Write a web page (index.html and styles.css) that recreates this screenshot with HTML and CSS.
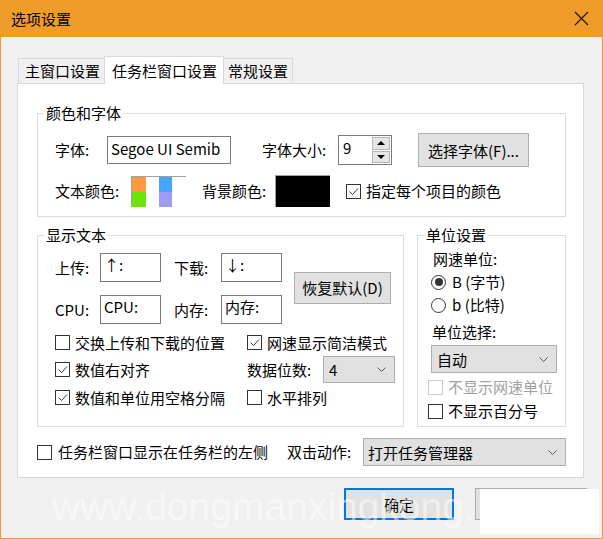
FILE: index.html
```html
<!DOCTYPE html>
<html lang="zh-CN">
<head>
    <meta charset="UTF-8">
    <title>选项设置</title>
    <link rel="stylesheet" href="styles.css">
</head>
<body>
    <div class="window">
        <div class="titlebar">
            <span class="title">选项设置</span>
            <svg class="close" width="15" height="15" viewBox="0 0 15 15">
                <path d="M1 1 L14 14 M14 1 L1 14" stroke="#111" stroke-width="1.1" fill="none"/>
            </svg>
        </div>

        <div class="tabs">
            <div class="tab tab-main">主窗口设置</div>
            <div class="tab tab-taskbar active">任务栏窗口设置</div>
            <div class="tab tab-general">常规设置</div>
        </div>

        <div class="panel">
            <fieldset class="group group-font">
                <legend>颜色和字体</legend>
                <div class="font-row">
                    <span class="label lbl-font">字体:</span>
                    <div class="edit edit-font">Segoe UI Semib</div>
                    <span class="label lbl-size">字体大小:</span>
                    <div class="spin">
                        <div class="spin-val">9</div>
                        <div class="spin-btns">
                            <div class="spin-btn"><span class="arrow-up"></span></div>
                            <div class="spin-btn"><span class="arrow-down"></span></div>
                        </div>
                    </div>
                    <div class="btn btn-font">选择字体(F)...</div>
                </div>
                <div class="color-row">
                    <span class="label lbl-textcolor">文本颜色:</span>
                    <div class="swatch">
                        <span class="sw-orange"></span><span></span><span class="sw-blue"></span><span></span>
                        <span class="sw-green"></span><span></span><span class="sw-purple"></span><span></span>
                    </div>
                    <span class="label lbl-bgcolor">背景颜色:</span>
                    <div class="bg-color"></div>
                    <label class="check check-each">
                        <span class="box checked"><svg width="13" height="13" viewBox="0 0 13 13"><path d="M2.5 6.5 L5.5 9.5 L11 3.5" stroke="#333" stroke-width="1" fill="none"/></svg></span>
                        指定每个项目的颜色
                    </label>
                </div>
            </fieldset>

            <div class="group-row">
                <fieldset class="group group-text">
                    <legend>显示文本</legend>
                    <div class="text-top">
                        <div class="text-grid">
                            <span class="label">上传:</span>
                            <div class="edit">↑:</div>
                            <span class="label lbl-right">下载:</span>
                            <div class="edit">↓:</div>
                            <span class="label">CPU:</span>
                            <div class="edit">CPU:</div>
                            <span class="label lbl-right">内存:</span>
                            <div class="edit">内存:</div>
                        </div>
                        <div class="btn btn-reset">恢复默认(D)</div>
                    </div>
                    <div class="check-grid">
                        <label class="check">
                            <span class="box"></span>
                            交换上传和下载的位置
                        </label>
                        <label class="check">
                            <span class="box checked"><svg width="13" height="13" viewBox="0 0 13 13"><path d="M2.5 6.5 L5.5 9.5 L11 3.5" stroke="#333" stroke-width="1" fill="none"/></svg></span>
                            网速显示简洁模式
                        </label>
                        <label class="check">
                            <span class="box checked"><svg width="13" height="13" viewBox="0 0 13 13"><path d="M2.5 6.5 L5.5 9.5 L11 3.5" stroke="#333" stroke-width="1" fill="none"/></svg></span>
                            数值右对齐
                        </label>
                        <div class="digits">
                            <span class="label lbl-digits">数据位数:</span>
                            <div class="combo combo-digits">
                                <span>4</span>
                                <svg width="9" height="5" viewBox="0 0 9 5"><path d="M0.5 0.5 L4.5 4.5 L8.5 0.5" stroke="#555" fill="none"/></svg>
                            </div>
                        </div>
                        <label class="check">
                            <span class="box checked"><svg width="13" height="13" viewBox="0 0 13 13"><path d="M2.5 6.5 L5.5 9.5 L11 3.5" stroke="#333" stroke-width="1" fill="none"/></svg></span>
                            数值和单位用空格分隔
                        </label>
                        <label class="check">
                            <span class="box"></span>
                            水平排列
                        </label>
                    </div>
                </fieldset>

                <fieldset class="group group-unit">
                    <legend>单位设置</legend>
                    <div class="unit-line unit-title">网速单位:</div>
                    <label class="radio radio-byte">
                        <span class="dot selected"></span>
                        B (字节)
                    </label>
                    <label class="radio radio-bit">
                        <span class="dot"></span>
                        b (比特)
                    </label>
                    <div class="unit-line unit-select">单位选择:</div>
                    <div class="combo combo-unit">
                        <span>自动</span>
                        <svg width="9" height="5" viewBox="0 0 9 5"><path d="M0.5 0.5 L4.5 4.5 L8.5 0.5" stroke="#555" fill="none"/></svg>
                    </div>
                    <label class="check disabled unit-check">
                        <span class="box"></span>
                        不显示网速单位
                    </label>
                    <label class="check unit-check unit-check-last">
                        <span class="box"></span>
                        不显示百分号
                    </label>
                </fieldset>
            </div>

            <div class="bottom-row">
                <label class="check check-left">
                    <span class="box"></span>
                    任务栏窗口显示在任务栏的左侧
                </label>
                <span class="label lbl-dblclick">双击动作:</span>
                <div class="combo combo-action">
                    <span>打开任务管理器</span>
                    <svg width="9" height="5" viewBox="0 0 9 5"><path d="M0.5 0.5 L4.5 4.5 L8.5 0.5" stroke="#555" fill="none"/></svg>
                </div>
            </div>
        </div>

        <div class="buttons">
            <div class="btn btn-ok">确定</div>
            <div class="btn btn-cancel">取消</div>
        </div>

        <div class="watermark">www.dongmanxingkong.</div>
        <div class="cover"></div>
    </div>
</body>
</html>
```

FILE: styles.css
```css
body {
    margin: 0;
    font-family: "Noto Sans CJK SC", "Noto Sans", sans-serif;
    font-size: 15px;
    color: #000;
    background: #fff;
}

.window {
    position: relative;
    width: 603px;
    height: 539px;
    box-sizing: border-box;
    border: 1px solid #ef9c2b;
    border-top: 0;
    background: #f0f0f0;
    overflow: hidden;
}

.titlebar {
    display: flex;
    align-items: center;
    justify-content: space-between;
    height: 37px;
    margin: 0 -1px;
    padding: 0 14px 0 11px;
    background: #ef9c2b;
}

.title {
    line-height: 20px;
}

/* tabs */
.tabs {
    display: flex;
    align-items: flex-end;
    height: 28px;
    margin-top: 19px;
    margin-bottom: -1px;
    padding-left: 17px;
    position: relative;
    z-index: 1;
}

.tab {
    box-sizing: border-box;
    height: 25px;
    margin-bottom: 1px;
    border: 1px solid #d9d9d9;
    border-bottom: 0;
    background: #f0f0f0;
    line-height: 23px;
    white-space: nowrap;
}

.tab-main {
    width: 86px;
    padding-left: 6px;
    border-right: 0;
}

.tab-taskbar {
    width: 120px;
    padding-left: 7px;
}

.tab-general {
    width: 69px;
    padding-left: 4px;
    border-left: 0;
}

.tab.active {
    height: 28px;
    margin-bottom: 0;
    background: #fff;
    line-height: 27px;
}

.panel {
    box-sizing: border-box;
    width: 567px;
    height: 395px;
    margin-left: 16px;
    padding: 19px 17px 0 19px;
    border: 1px solid #d9d9d9;
    background: #fff;
}

/* group boxes */
.group {
    margin: 0;
    padding: 0;
    min-width: 0;
    border: 1px solid #dcdcdc;
}

.group legend {
    margin-left: 6px;
    padding: 0 2px;
    line-height: 20px;
    height: 20px;
}

.label {
    white-space: nowrap;
    line-height: 20px;
}

.edit {
    box-sizing: border-box;
    border: 1px solid #7a7a7a;
    background: #fff;
    padding: 2px 3px;
    line-height: 20px;
    white-space: nowrap;
    overflow: hidden;
}

.btn {
    box-sizing: border-box;
    display: flex;
    align-items: center;
    justify-content: center;
    border: 1px solid #adadad;
    background: #e1e1e1;
    white-space: nowrap;
}

/* colour & font group */
.font-row {
    display: flex;
    align-items: center;
    height: 34px;
    margin-top: 10px;
    padding-left: 17px;
}

.lbl-font {
    width: 52px;
}

.edit-font {
    width: 124px;
    height: 28px;
}

.lbl-size {
    width: 76px;
    margin-left: 31px;
}

.spin {
    display: flex;
    box-sizing: border-box;
    width: 54px;
    height: 30px;
    border: 1px solid #7a7a7a;
    background: #fff;
}

.spin-val {
    flex: 1;
    padding-left: 4px;
    line-height: 24px;
}

.spin-btns {
    display: flex;
    flex-direction: column;
    gap: 1px;
    width: 20px;
    padding: 1px;
    box-sizing: border-box;
}

.spin-btn {
    flex: 1;
    display: flex;
    align-items: center;
    justify-content: center;
    border: 1px solid #b5b5b5;
    background: #e5e5e5;
}

.arrow-up,
.arrow-down {
    width: 0;
    height: 0;
    border-left: 4px solid transparent;
    border-right: 4px solid transparent;
}

.arrow-up {
    border-bottom: 4px solid #000;
}

.arrow-down {
    border-top: 4px solid #000;
}

.btn-font {
    width: 111px;
    height: 34px;
    margin-left: 26px;
}

.color-row {
    display: flex;
    align-items: center;
    height: 32px;
    margin-top: 8px;
    margin-bottom: 9px;
    padding-left: 17px;
}

.lbl-textcolor {
    width: 76px;
}

.swatch {
    display: grid;
    grid-template-columns: 14px 13px 13px 14px;
    grid-template-rows: 15px 15px;
    box-sizing: border-box;
    width: 55px;
    height: 31px;
    border-top: 1px solid #a0a0a0;
    border-left: 1px solid #a0a0a0;
    background: #fff;
}

.sw-orange { background: #fd9844; }
.sw-green { background: #6ae40c; }
.sw-blue { background: #46a6fc; }
.sw-purple { background: #9d9cf5; }

.lbl-bgcolor {
    width: 73px;
    margin-left: 16px;
}

.bg-color {
    box-sizing: border-box;
    width: 55px;
    height: 32px;
    border-top: 1px solid #a0a0a0;
    border-left: 1px solid #a0a0a0;
    background: #000;
}

.check-each {
    margin-left: 16px;
}

/* checkboxes, radios, combos */
.check {
    display: flex;
    align-items: center;
    gap: 5px;
    white-space: nowrap;
    line-height: 20px;
}

.box {
    display: flex;
    align-items: center;
    justify-content: center;
    box-sizing: border-box;
    width: 15px;
    height: 15px;
    border: 1px solid #333;
    background: #fff;
}

.check.disabled {
    color: #a0a0a0;
}

.check.disabled .box {
    border-color: #cccccc;
}

.radio {
    display: flex;
    align-items: center;
    gap: 6px;
    white-space: nowrap;
    line-height: 20px;
}

.dot {
    display: flex;
    align-items: center;
    justify-content: center;
    box-sizing: border-box;
    width: 15px;
    height: 15px;
    border: 1px solid #333;
    border-radius: 50%;
    background: #fff;
}

.dot.selected::after {
    content: "";
    width: 8px;
    height: 8px;
    border-radius: 50%;
    background: #333;
}

.combo {
    display: flex;
    align-items: center;
    justify-content: space-between;
    box-sizing: border-box;
    height: 28px;
    padding: 0 8px 0 5px;
    border: 1px solid #adadad;
    background: #e1e1e1;
    white-space: nowrap;
}

/* display text group */
.group-row {
    display: flex;
    gap: 13px;
    margin-top: 8px;
}

.group-text {
    width: 367px;
    box-sizing: border-box;
}

.group-unit {
    flex: 1;
}

.text-top {
    display: flex;
    align-items: center;
    margin-top: 8px;
    padding-left: 17px;
}

.text-grid {
    display: grid;
    grid-template-columns: 45px 61px 60px 61px;
    grid-template-rows: 29px 29px;
    row-gap: 13px;
    align-items: center;
}

.text-grid .edit {
    height: 29px;
    padding-top: 1px;
}

.lbl-right {
    padding-left: 13px;
}

.btn-reset {
    width: 97px;
    height: 32px;
    margin-left: 12px;
    margin-top: -2px;
}

.check-grid {
    display: grid;
    grid-template-columns: 192px 1fr;
    grid-template-rows: 25px 29px 27px;
    align-items: center;
    margin-top: 6px;
    margin-bottom: 15px;
    padding-left: 17px;
}

.digits {
    display: flex;
    align-items: center;
}

.lbl-digits {
    width: 76px;
}

.combo-digits {
    width: 72px;
    height: 27px;
}

/* unit group */
.group-unit {
    padding-left: 13px;
}

.group-unit legend {
    margin-left: -7px;
}

.unit-line {
    display: flex;
    align-items: center;
    line-height: 20px;
}

.unit-title {
    height: 22px;
    margin-top: 3px;
    padding-left: 2px;
}

.radio-byte {
    height: 24px;
}

.radio-bit {
    height: 22px;
}

.unit-select {
    height: 20px;
    margin-top: 6px;
    padding-left: 1px;
}

.combo-unit {
    width: 126px;
    margin-top: 3px;
}

.unit-check {
    height: 22px;
    margin-left: -3px;
    margin-top: 3px;
}

.unit-check-last {
    height: 24px;
    margin-top: 1px;
}

/* bottom row */
.bottom-row {
    display: flex;
    align-items: center;
    height: 28px;
    margin-top: 11px;
}

.check-left {
    gap: 6px;
}

.lbl-dblclick {
    width: 76px;
    margin-left: 19px;
}

.combo-action {
    width: 203px;
    padding-left: 4px;
}

.buttons {
    display: flex;
    justify-content: flex-end;
    gap: 21px;
    margin-top: 10px;
    padding-right: 15px;
}

.btn-ok {
    width: 110px;
    height: 32px;
    border: 2px solid #0078d7;
}

.btn-cancel {
    width: 112px;
    height: 32px;
}

/* watermark pasted over the screenshot */
.watermark {
    position: absolute;
    left: 51px;
    top: 487px;
    font-family: "Liberation Sans", Arial, sans-serif;
    font-size: 39px;
    line-height: 39px;
    color: rgba(255, 255, 255, 0.5);
    white-space: nowrap;
    pointer-events: none;
}

.cover {
    position: absolute;
    left: 479px;
    top: 489px;
    width: 119px;
    height: 45px;
    background: #fff;
}
```
